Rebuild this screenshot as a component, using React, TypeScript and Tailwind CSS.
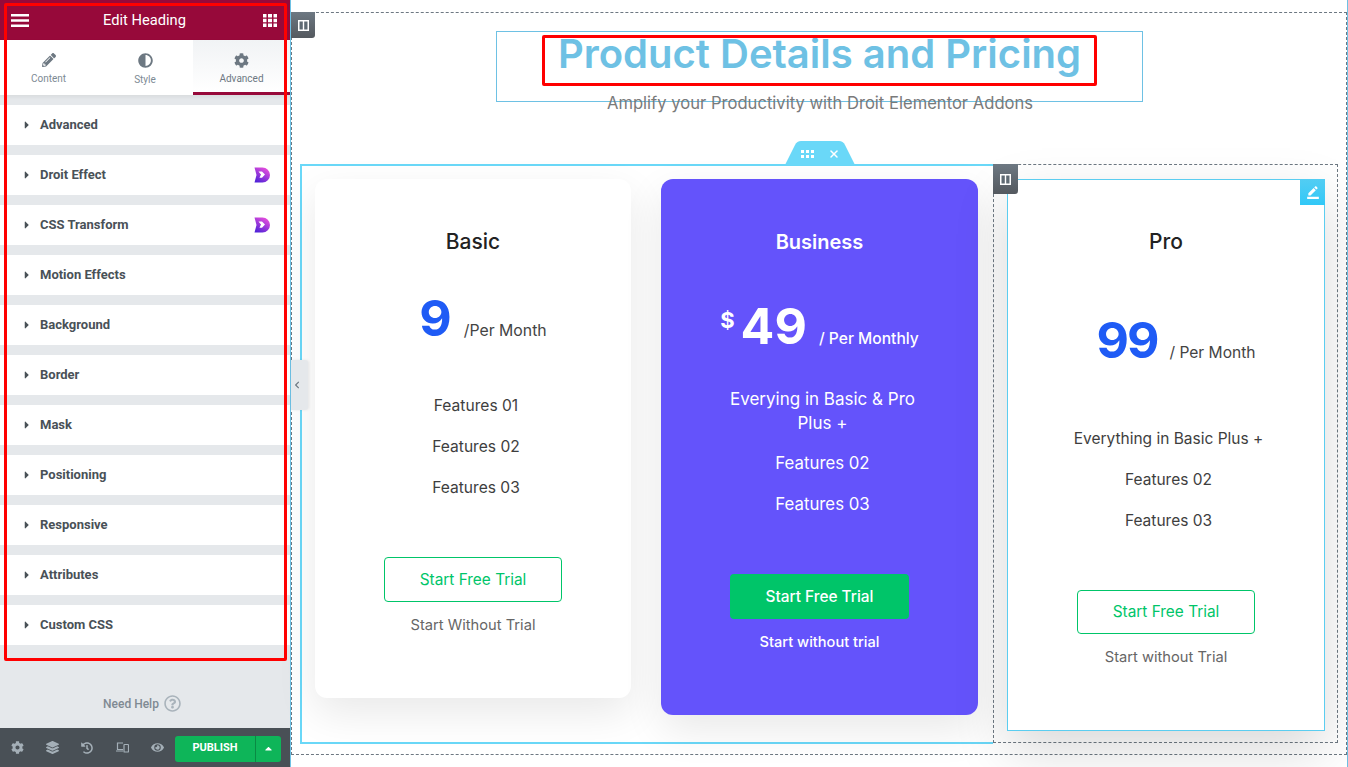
import { FaAdjust, FaCaretRight, FaCaretUp, FaChevronLeft, FaCog, FaEye, FaHistory, FaLayerGroup, FaPencilAlt, FaRegQuestionCircle } from 'react-icons/fa'
import { MdBorderColor } from 'react-icons/md'
import { X } from 'lucide-react'

const sections = [
  { name: 'Advanced' },
  { name: 'Droit Effect', droit: true },
  { name: 'CSS Transform', droit: true },
  { name: 'Motion Effects' },
  { name: 'Background' },
  { name: 'Border' },
  { name: 'Mask' },
  { name: 'Positioning' },
  { name: 'Responsive' },
  { name: 'Attributes' },
  { name: 'Custom CSS' },
]

function DroitLogo({ id }: { id: string }) {
  return (
    <svg width="16" height="16" viewBox="0 0 16 16">
      <defs>
        <linearGradient id={id} x1="0.2" y1="1" x2="0.8" y2="0">
          <stop offset="0" stopColor="#4f23d8" />
          <stop offset="1" stopColor="#ee4fdc" />
        </linearGradient>
      </defs>
      <path d="M0.500 0.500H8.500a7.500 7.500 0 0 1 0 15H0.500L2.500 8Z" fill={`url(#${id})`} />
      <path d="M4.500 4.500H8l3 3-3 3.200H5.500L7 7.500Z" fill="#fff" />
    </svg>
  )
}

function ColumnIcon() {
  return (
    <svg width="11" height="11" viewBox="0 0 11 11">
      <path d="M0 0h11v11H0z" fill="#fff" />
      <path d="M1.500 1.500h3.300v8H1.500zM6.200 1.500h3.300v8H6.200z" fill="#5f6a73" />
    </svg>
  )
}

function MenuIcon() {
  return (
    <svg width="18" height="13" viewBox="0 0 18 13" fill="#fff">
      <path d="M0 0h18v2.600H0zM0 5.200h18v2.600H0zM0 10.400h18V13H0z" />
    </svg>
  )
}

function GridIcon() {
  return (
    <svg width="14" height="13" viewBox="0 0 14 13" fill="#fff">
      <path d="M0 0h3.500v3.500H0zM5 0h4v3.500H5zM10.500 0H14v3.500h-3.500zM0 4.800h3.500v3.500H0zM5 4.800h4v3.500H5zM10.500 4.800H14v3.500h-3.500zM0 9.500h3.500V13H0zM5 9.500h4V13H5zM10.500 9.500H14V13h-3.500z" />
    </svg>
  )
}

function DevicesIcon() {
  return (
    <svg width="13" height="12" viewBox="0 0 13 12" fill="none" stroke="#a4afb7" strokeWidth="1.200">
      <path d="M7 1H1.500v6.500H7M0 9h7" />
      <rect x="8" y="2.500" width="4.500" height="7.500" rx="0.600" />
    </svg>
  )
}

function Sidebar() {
  return (
    <aside className="w-[290px] h-[767px] shrink-0 flex flex-col bg-[#e5e8eb] font-['Roboto',sans-serif]">
      <header className="h-10 shrink-0 flex items-center justify-between pl-[11px] pr-[13px] bg-[#97093a] text-white">
        <MenuIcon />
        <span className="text-[14.7px] -ml-[3px]">Edit Heading</span>
        <GridIcon />
      </header>
      <nav className="h-[55px] shrink-0 flex bg-white text-[#6d7882] shadow-[0_2px_4px_rgba(0,0,0,0.06)]">
        <div className="w-[97px] flex flex-col items-center pt-[13px] gap-[6px]">
          <FaPencilAlt size={14} />
          <span className="text-[10px] leading-3 text-[#7d8a94]">Content</span>
        </div>
        <div className="w-[96px] flex flex-col items-center pt-[13px] gap-[6px]">
          <FaAdjust size={15} />
          <span className="text-[10px] leading-3 text-[#7d8a94]">Style</span>
        </div>
        <div className="flex-1 flex flex-col items-center pt-[13px] gap-[5px] border-b-[3px] border-[#97093a] bg-gradient-to-b from-[#f1f3f5] to-white">
          <FaCog size={15} />
          <span className="text-[10px] leading-3">Advanced</span>
        </div>
      </nav>
      <div className="flex flex-col gap-[10px] pt-[10px]">
        {sections.map(s => (
          <div key={s.name} className="h-10 flex items-center bg-white pl-[21px] pr-5 text-[#495157]">
            <FaCaretRight size={12} className="shrink-0" />
            <span className="ml-[7px] -mt-[2px] text-[13px] font-bold flex-1 leading-none">{s.name}</span>
            {s.droit && <DroitLogo id={`droit-${s.name.charAt(0)}`} />}
          </div>
        ))}
      </div>
      <div className="flex-1 flex items-center justify-center gap-[5px] pt-[34px] pr-[6px] text-[#7f8a93]">
        <span className="text-xs font-medium">Need Help</span>
        <FaRegQuestionCircle size={17} className="text-[#a9b3bb]" />
      </div>
      <footer className="h-[39px] shrink-0 flex items-center bg-[#495056] pl-[11px] pr-[9px] text-[#a4afb7]">
        <FaCog size={13} />
        <FaLayerGroup size={13} className="ml-[22px]" />
        <FaHistory size={12} className="ml-[22px]" />
        <span className="ml-[23px]"><DevicesIcon /></span>
        <FaEye size={13} className="ml-[22px]" />
        <div className="ml-[11px] mt-[2px] h-[26px] flex text-white">
          <div className="w-20 flex items-center justify-center bg-[#0eb559] rounded-l-[3px] text-[11px] font-bold">PUBLISH</div>
          <div className="w-[26px] flex items-center justify-center bg-[#0eb559] border-l border-[#0a8a44] rounded-r-[3px]">
            <FaCaretUp size={11} />
          </div>
        </div>
      </footer>
    </aside>
  )
}

function BasicCard() {
  return (
    <div className="w-[316px] h-[519px] shrink-0 bg-white rounded-xl pt-[48px] flex flex-col items-center shadow-[0_15px_40px_rgba(0,0,0,0.09)]">
      <h3 className="h-[30px] leading-[30px] text-[21px] font-medium text-[#222]">Basic</h3>
      <div className="mt-[31px] h-[60px] flex items-baseline justify-center pl-5 gap-3">
        <span className="text-[50px] leading-[60px] font-bold text-[#1f5bf5]">9</span>
        <span className="text-[15.8px] text-[#444]">/Per Month</span>
      </div>
      <ul className="mt-[37px] pl-[6px] text-[15.6px] leading-[41px] text-[#3e3e3e] text-center">
        <li>Features 01</li>
        <li>Features 02</li>
        <li>Features 03</li>
      </ul>
      <div className="mt-[49px] w-[178px] h-[45px] flex items-center justify-center border border-[#00c569] rounded text-[15.4px] text-[#00c569]">Start Free Trial</div>
      <p className="mt-[11px] leading-6 text-[14.7px] text-[#666]">Start Without Trial</p>
    </div>
  )
}

function BusinessCard() {
  return (
    <div className="w-[317px] h-[536px] shrink-0 ml-[30px] bg-[#6453fb] rounded-xl pt-[48px] flex flex-col items-center text-white shadow-[0_15px_40px_rgba(0,0,0,0.09)]">
      <h3 className="h-[30px] leading-[30px] text-[20px] font-semibold">Business</h3>
      <div className="mt-[39px] h-[60px] flex items-baseline justify-center">
        <span className="self-start mt-[10px] text-[22px] leading-7 font-bold mr-[6px]">$</span>
        <span className="text-[50px] leading-[60px] font-bold">49</span>
        <span className="ml-[12px] text-[15.6px] font-medium">/ Per Monthly</span>
      </div>
      <p className="mt-[31px] pl-[6px] text-[17px] leading-6 text-center">Everying in Basic &amp; Pro<br />Plus +</p>
      <ul className="mt-[8px] pl-[6px] text-[16.8px] leading-[41px] text-center">
        <li>Features 02</li>
        <li>Features 03</li>
      </ul>
      <div className="mt-[49px] w-[179px] h-[45px] flex items-center justify-center bg-[#00c569] rounded text-[15.4px] font-medium">Start Free Trial</div>
      <p className="mt-[11px] leading-6 text-[14.6px] font-medium">Start without trial</p>
    </div>
  )
}

function ProCard() {
  return (
    <div className="relative w-[318px] h-[552px] bg-white border border-[#5bcdf0] pt-[47px] flex flex-col items-center shadow-[0_20px_50px_rgba(0,0,0,0.15)]">
      <div className="absolute -right-px -top-px w-[25px] h-[26px] flex items-center justify-center bg-gradient-to-b from-[#52cdf3] to-[#30c8f7] text-white">
        <MdBorderColor size={14} />
      </div>
      <h3 className="h-[30px] leading-[30px] text-[21px] font-medium text-[#222]">Pro</h3>
      <div className="mt-[53px] h-[60px] flex items-baseline justify-center pl-5 gap-3">
        <span className="text-[50px] leading-[60px] font-bold tracking-[-2px] text-[#1f5bf5]">99</span>
        <span className="text-[15.6px] text-[#444]">/ Per Month</span>
      </div>
      <ul className="mt-[48px] pl-[5px] text-[15.5px] leading-[41px] text-[#3e3e3e] text-center">
        <li>Everything in Basic Plus +</li>
        <li>Features 02</li>
        <li>Features 03</li>
      </ul>
      <div className="mt-[49px] w-[178px] h-[44px] flex items-center justify-center border border-[#00c569] rounded text-[15.4px] text-[#00c569]">Start Free Trial</div>
      <p className="mt-[11px] leading-6 text-[14.7px] text-[#666]">Start without Trial</p>
    </div>
  )
}

export default function App() {
  return (
    <div className="relative w-[1348px] h-[767px] overflow-hidden flex bg-white font-['Inter',sans-serif]">
      <Sidebar />

      <main className="flex-1 h-[767px] border-l border-r border-[#6ec1e4] pt-3 bg-white">
        <div className="relative h-[743px] border border-dashed border-[#6d7882]">
          <div className="absolute -left-px -top-px w-6 h-[26px] flex items-center justify-center bg-gradient-to-b from-[#6d7882] to-[#54595f] rounded-br-[3px]">
            <ColumnIcon />
          </div>

          <div className="ml-[204px] mt-[18px] w-[647px] h-[71px] border border-[#6ec1e4] flex justify-center">
            <h1 className="text-[40px] leading-[44px] font-semibold text-[#6ec1e4]">Product Details and Pricing</h1>
          </div>
          <p className="-mt-[11px] ml-[2px] leading-6 text-center text-[16.6px] text-[#7a7a7a]">Amplify your Productivity with Droit Elementor Addons</p>

          <div className="relative mt-[49px] ml-[8px] flex">
            <div className="absolute left-[485px] -top-[23px] w-[70px] h-6">
              <svg width="70" height="24" viewBox="0 0 70 24" className="absolute inset-0">
                <path d="M0 24 L10 4 Q12 0 16 0 H54 Q58 0 60 4 L70 24Z" fill="#6ad8f8" />
              </svg>
              <div className="relative h-full flex items-center justify-center gap-[13px] pt-[2px] text-white">
                <svg width="14" height="9" viewBox="0 0 14 9" fill="#fff">
                  <path d="M0 0h3v3H0zM5 0h3v3H5zM10 0h3v3h-3zM0 5h3v3H0zM5 5h3v3H5zM10 5h3v3h-3z" />
                </svg>
                <X size={12} strokeWidth={3} />
              </div>
            </div>

            <div className="w-[693px] h-[580px] flex items-start border-l-2 border-t-2 border-b-2 border-[#6ad8f8] pl-[13px] pt-[13px]">
              <BasicCard />
              <BusinessCard />
            </div>

            <div className="relative w-[345px] h-[579px] border border-dashed border-[#6d7882] pl-[13px] pt-[14px]">
              <ProCard />
              <div className="absolute -left-px -top-px w-[25px] h-[30px] flex items-center justify-center bg-gradient-to-b from-[#6d7882] to-[#54595f] rounded-br-[3px]">
                <ColumnIcon />
              </div>
            </div>
          </div>

          <div className="absolute -left-px top-[347px] w-[17px] h-[50px] flex items-center justify-center pr-[5px] bg-[#e5e8eb] rounded-r-[3px] text-[#6d7882] shadow-[1px_0_3px_rgba(0,0,0,0.08)]">
            <FaChevronLeft size={8} />
          </div>
        </div>
      </main>

      {/* red annotation boxes from the screenshot */}
      <div className="absolute left-1 top-[3px] w-[283px] h-[658px] border-[3px] border-[#ff0000] rounded-[2px] pointer-events-none" />
      <div className="absolute left-[542px] top-[35px] w-[555px] h-[51px] border-[3px] border-[#ff0000] rounded-[2px] pointer-events-none" />
    </div>
  )
}
